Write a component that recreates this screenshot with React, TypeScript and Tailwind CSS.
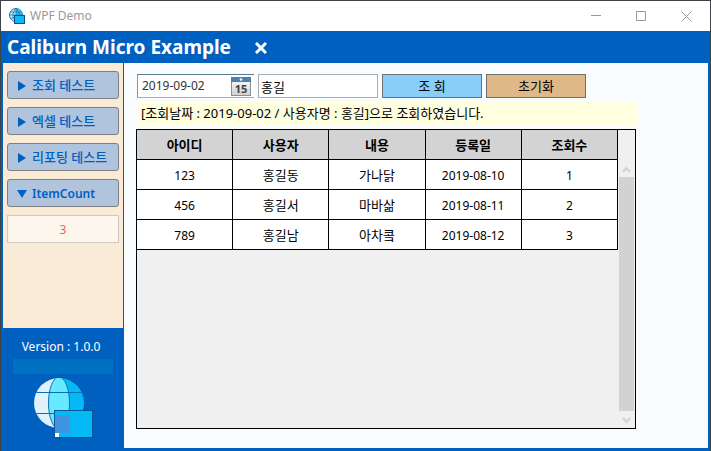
import { useState } from "react";

const rows = [
  { id: "123", user: "홍길동", content: "가나닭", date: "2019-08-10", count: 1 },
  { id: "456", user: "홍길서", content: "마바삶", date: "2019-08-11", count: 2 },
  { id: "789", user: "홍길남", content: "아차콬", date: "2019-08-12", count: 3 },
];

const columns = ["아이디", "사용자", "내용", "등록일", "조회수"];

function TitleIcon() {
  return (
    <svg width="17" height="16" viewBox="0 0 17 16" aria-hidden="true">
      <circle cx="7" cy="7" r="6.5" fill="#c9effc" stroke="#1673b4" />
      <path d="M7 .5a6.5 6.5 0 0 1 0 13z" fill="#37c4f5" />
      <path d="M7 .5v13M.5 7h13M1.5 4h11M1.5 10h11M7 .5C3 4 3 10 7 13.500M7 .5c4 3.500 4 9.500 0 13" fill="none" stroke="#1673b4" strokeWidth=".8" />
      <rect x="5.500" y="7.500" width="10" height="8" fill="#10b8f4" stroke="#0a4f8c" />
    </svg>
  );
}

function GlobeLogo() {
  return (
    <svg width="60" height="60" viewBox="0 0 60 60" aria-hidden="true">
      <defs>
        <clipPath id="globe">
          <circle cx="26" cy="25" r="25" />
        </clipPath>
      </defs>
      <g clipPath="url(#globe)">
        <rect width="26" height="52" fill="#dff2fb" />
        <rect x="26" width="26" height="52" fill="#04b9f4" />
        <ellipse cx="26" cy="25" rx="10.500" ry="26" fill="#66eaff" stroke="#0b6fb5" />
        <path d="M0 14.500h52M0 35.500h52" stroke="#0b6fb5" />
      </g>
      <rect x="21.500" y="32.500" width="38" height="27" fill="#04b9f4" stroke="#0a5596" />
      <rect x="22" y="37" width="15" height="18" fill="#3f95e2" />
      <rect x="22" y="55" width="4" height="4" fill="#fff" />
    </svg>
  );
}

function CalendarIcon() {
  return (
    <svg width="20" height="19" viewBox="0 0 20 19" aria-hidden="true">
      <defs>
        <linearGradient id="page" x1="0" y1="0" x2="0" y2="1">
          <stop offset="0" stopColor="#fff" />
          <stop offset="1" stopColor="#cfcfcf" />
        </linearGradient>
      </defs>
      <rect x=".5" y=".5" width="19" height="18" fill="url(#page)" stroke="#8a8f94" />
      <rect width="20" height="5" fill="#4b82ad" />
      <circle cx="10" cy="2.500" r="1.300" fill="#fff" />
      <text x="10" y="15.500" textAnchor="middle" fontSize="11" fontWeight="700" fontFamily="Noto Sans, sans-serif" fill="#3d4146">15</text>
    </svg>
  );
}

function MenuButton({ label, open = false, latin = false }: { label: string; open?: boolean; latin?: boolean }) {
  return (
    <button
      type="button"
      aria-expanded={open}
      className="flex h-7 w-full items-center gap-1 rounded-[3px] border border-[#808080] bg-[#b0c4de] pl-2 text-left font-semibold text-[#0060c0]"
    >
      <svg width="12" height="12" viewBox="0 0 12 12" className="mt-0.5 shrink-0" fill="currentColor" aria-hidden="true">
        {open ? <path d="M1 2h10l-5 8z" /> : <path d="M2 1l8 5-8 5z" />}
      </svg>
      <span className={latin ? "whitespace-nowrap pt-0.5 text-xs" : "whitespace-nowrap text-[13px] font-medium leading-4"}>{label}</span>
    </button>
  );
}

const hangul = /[가-힣]/;

export default function App() {
  const [date, setDate] = useState("2019-09-02");
  const [name, setName] = useState("홍길");

  return (
    <div className="flex min-h-screen flex-col border-t border-r border-l border-[#3d4248] bg-[#0060c0] font-['Noto_Sans','Noto_Sans_CJK_KR',sans-serif] text-xs text-black">
      <header className="flex h-[30px] items-center bg-white">
        <div className="flex flex-1 items-center gap-1 pl-2 text-[#999999]">
          <TitleIcon />
          <span>WPF Demo</span>
        </div>
        <div className="flex pr-px text-[#999999]">
          <button type="button" aria-label="Minimize" className="flex h-7 w-[45px] items-center justify-center">
            <svg width="11" height="11" viewBox="0 0 11 11" stroke="currentColor"><path d="M0 4.500h10" /></svg>
          </button>
          <button type="button" aria-label="Maximize" className="flex h-7 w-[45px] items-center justify-center">
            <svg width="11" height="11" viewBox="0 0 11 11" fill="none" stroke="currentColor"><path d="M.5.5h9v9h-9z" /></svg>
          </button>
          <button type="button" aria-label="Close" className="flex h-7 w-[45px] items-center justify-center">
            <svg width="11" height="11" viewBox="0 0 11 11" stroke="currentColor"><path d="M.5.5l10 10M10.500.5l-10 10" /></svg>
          </button>
        </div>
      </header>

      <div className="flex h-8 items-center gap-6 pt-0.5 pl-1.5 text-white">
        <h1 className="text-[19px] font-bold">Caliburn Micro Example</h1>
        <button type="button" aria-label="Close view">
          <svg width="12" height="12" viewBox="0 0 12 12" stroke="currentColor" strokeWidth="3"><path d="M1 1l10 10M11 1L1 11" /></svg>
        </button>
      </div>

      <div className="flex flex-1 pr-0.5 pb-[3px] pl-0.5">
        <aside className="flex w-[120px] shrink-0 flex-col">
          <nav className="flex flex-1 flex-col gap-2 bg-[#faebd7] px-1 pt-2">
            <MenuButton label="조회 테스트" />
            <MenuButton label="엑셀 테스트" />
            <MenuButton label="리포팅 테스트" />
            <MenuButton label="ItemCount" open latin />
            <input
              aria-label="ItemCount"
              readOnly
              value={rows.length}
              className="h-7 w-full border border-[#cfc8be] bg-[#fdf6ec] text-center text-[#e06666]"
            />
          </nav>
          <div className="flex h-[120px] flex-col items-center pt-2 text-white">
            <p className="h-[23px] pr-1 leading-[22px]">Version : 1.0.0</p>
            <div className="mb-1 h-[15px] w-[100px] bg-[#0070c0]" />
            <GlobeLogo />
          </div>
        </aside>

        <main className="ml-px flex min-w-0 flex-1 flex-col bg-[#f8fcff] px-3 pt-[11px] pb-[19px]">
          <form className="flex gap-1 pl-px" onSubmit={(e) => e.preventDefault()}>
            <div className="flex h-6 w-[117px] items-center border-t border-b border-l border-t-[#5f7a8c] border-b-[#abadb3] border-l-[#8c979f] bg-white pr-[3px]">
              <input
                aria-label="조회날짜"
                value={date}
                onChange={(e) => setDate(e.target.value)}
                className="w-full min-w-0 flex-1 bg-transparent pl-1 text-[#333333] outline-none"
              />
              <button type="button" aria-label="달력">
                <CalendarIcon />
              </button>
            </div>
            <input
              aria-label="사용자명"
              value={name}
              onChange={(e) => setName(e.target.value)}
              className="h-6 w-[120px] border border-[#abadb3] bg-white px-0.5 text-[13px] outline-none"
            />
            <button type="submit" className="h-6 w-[100px] border border-[#707070] bg-[#87cefa] text-[13px] leading-5">조 회</button>
            <button type="reset" className="h-6 w-[100px] border border-[#707070] bg-[#deb887] text-[13px] leading-5">초기화</button>
          </form>

          <p className="mt-[3px] ml-px h-6 max-w-[500px] bg-[#ffffe0] pl-1 text-[13px] leading-6">
            [조회날짜 : 2019-09-02 / 사용자명 : 홍길]으로 조회하였습니다.
          </p>

          <section className="mt-1 flex w-full max-w-[500px] flex-1 border border-black bg-[#f0f0f0]">
            <div className="flex-1">
              <table className="w-full table-fixed border-separate border-spacing-0 text-center">
                <thead>
                  <tr>
                    {columns.map((c) => (
                      <th key={c} className="h-[30px] border-r border-b border-black bg-[#d3d3d3] p-0 text-[13px] leading-5 font-semibold">{c}</th>
                    ))}
                  </tr>
                </thead>
                <tbody>
                  {rows.map((r) => (
                    <tr key={r.id}>
                      {[r.id, r.user, r.content, r.date, r.count].map((v, i) => (
                        <td
                          key={i}
                          className={
                            hangul.test(String(v))
                              ? "h-[30px] border-r border-b border-black bg-white p-0 text-[13px] leading-5"
                              : "h-[30px] border-r border-b border-black bg-white p-0 pt-0.5 leading-5"
                          }
                        >
                          {v}
                        </td>
                      ))}
                    </tr>
                  ))}
                </tbody>
              </table>
            </div>
            <div className="flex w-[17px] flex-col items-center pt-[30px] text-[#d2d2d2]">
              <svg width="9" height="17" viewBox="0 0 9 17" fill="none" stroke="currentColor" strokeWidth="2"><path d="M1 12l3.500-4L8 12" /></svg>
              <div className="w-[15px] flex-1 bg-[#d2d2d2]" />
              <svg width="9" height="17" viewBox="0 0 9 17" fill="none" stroke="currentColor" strokeWidth="2"><path d="M1 7l3.500 4L8 7" /></svg>
            </div>
          </section>
        </main>
      </div>
    </div>
  );
}
